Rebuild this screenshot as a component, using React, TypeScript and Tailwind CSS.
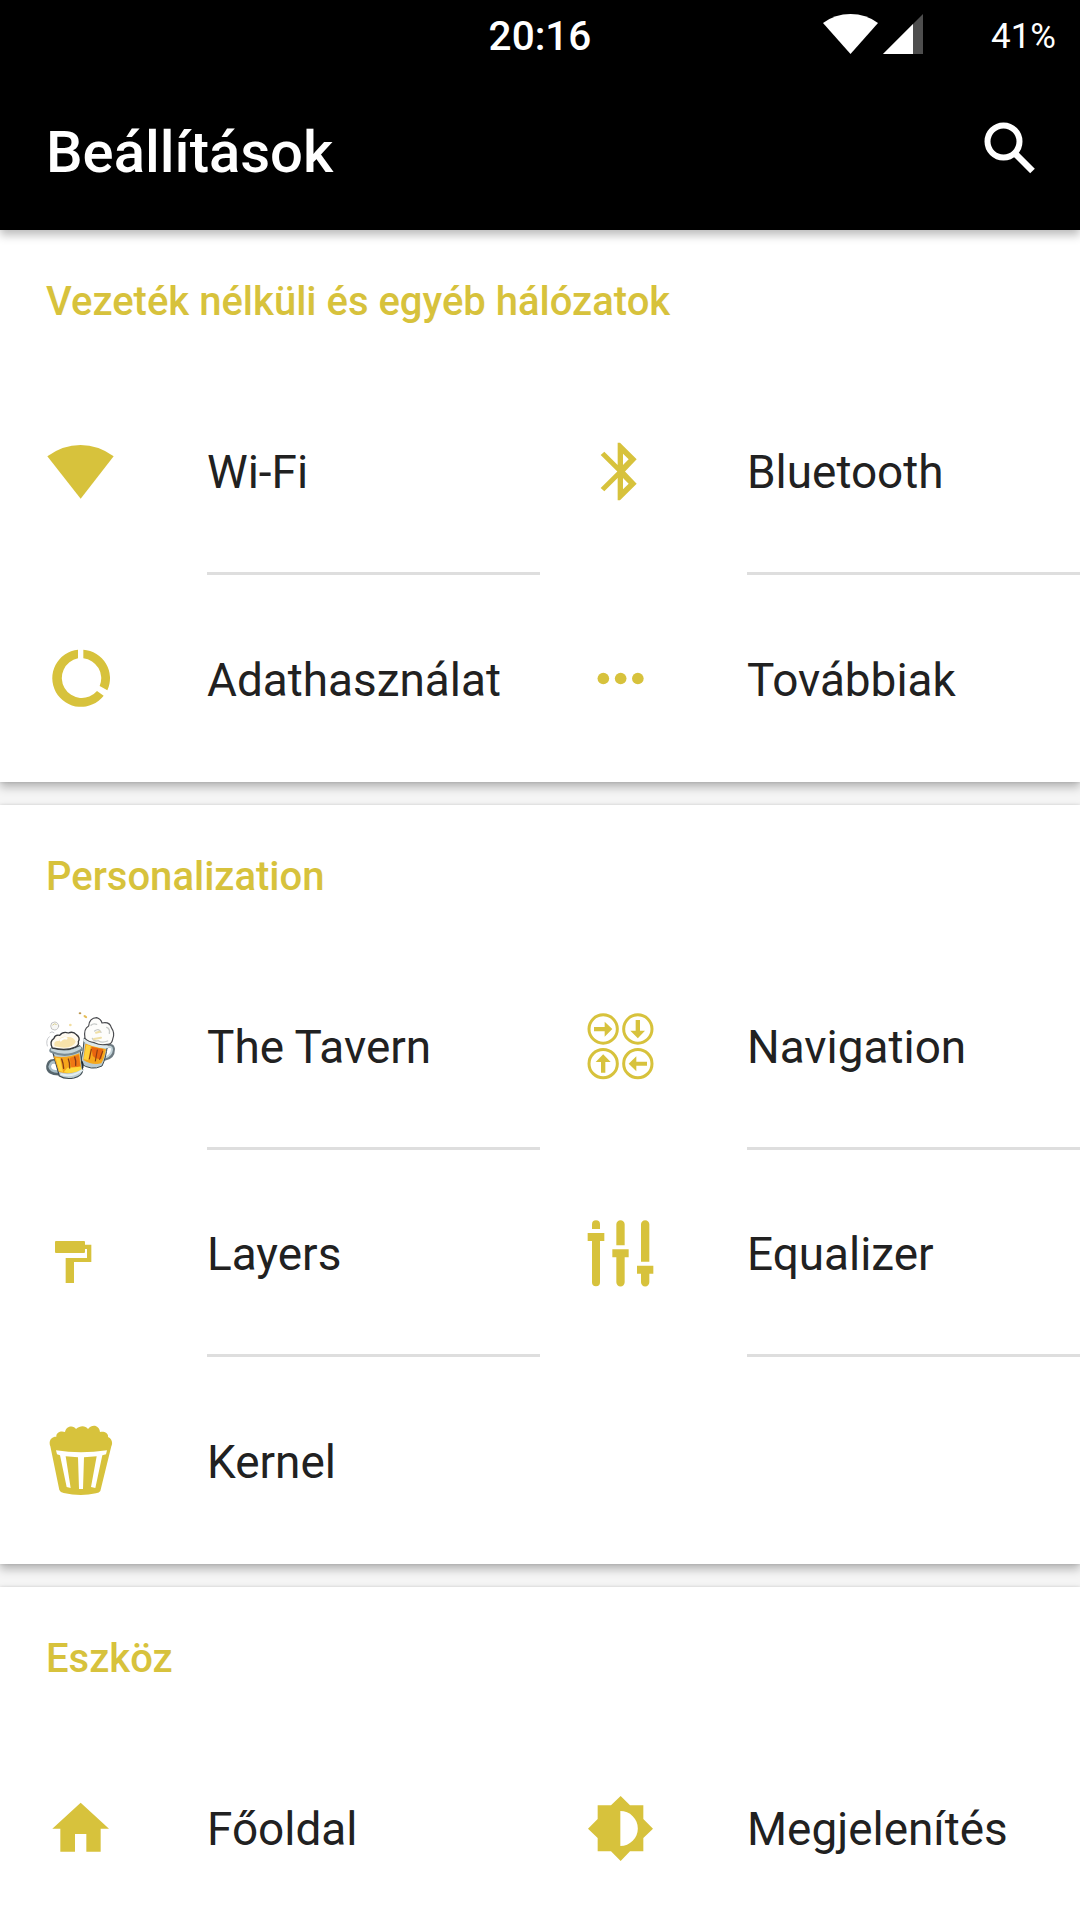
import type { ReactNode } from "react";

type IconProps = { box: string; children: ReactNode };

function Icon({ box, children }: IconProps) {
  return (
    <svg className="mb-px block size-[72px] shrink-0" viewBox={box} fill="currentColor">
      <g transform="translate(0 1.5)">{children}</g>
    </svg>
  );
}

const wifi = (
  <Icon box="45 46.5 216 216">
    <path d="M52 109Q98 75 151.500 75T251 109L152 236Z" />
  </Icon>
);

const bluetooth = (
  <Icon box="75 46.5 216 216">
    <path
      fillRule="evenodd"
      d="M173 68H180L230 118L195 154.500L230 191L180 241H173V174L133 214L122 204L172 154.500L122 105L133 95L173 135ZM189 101V135L206 118ZM189 174V208L206 191Z"
    />
  </Icon>
);

const dataUsage = (
  <Icon box="45 667.5 216 216">
    <path d="M144 689V715A60 60 0 1 0 201 813L221 827A86 86 0 1 1 144 689Z" />
    <path d="M160 689A86 86 0 0 1 232 811L209 798A60 60 0 0 0 160 715Z" />
  </Icon>
);

const more = (
  <Icon box="75 667.5 216 216">
    <circle cx="130" cy="775.500" r="17.500" />
    <circle cx="182" cy="775.500" r="17.500" />
    <circle cx="233.500" cy="775.500" r="17.500" />
  </Icon>
);

const tavern = (
  <Icon box="45 61.5 216 216">
    <g strokeLinecap="round" strokeLinejoin="round">
      {/* stray bubbles */}
      <circle cx="74" cy="108" r="12" fill="#f7f7f5" stroke="#b9b9b9" strokeWidth="2.500" />
      <path d="M68 105q5-7 11-2" fill="none" stroke="#d8cd90" strokeWidth="3" />
      <ellipse cx="150" cy="70" rx="4" ry="3" fill="#bb9750" />
      <ellipse cx="166" cy="80" rx="6" ry="3.500" fill="#e5bd58" transform="rotate(35 166 80)" />
      <circle cx="121" cy="105" r="4" fill="#f2dea0" />
      <path d="M52 168Q46 150 58 140M60 128Q66 122 72 128" fill="none" stroke="#c7c9cc" strokeWidth="3" />
      {/* right mug */}
      <path d="M229 172Q248 160 250 177Q250 203 224 207" fill="none" stroke="#6d7a81" strokeWidth="10" />
      <path d="M229 173Q246 165 246 179Q244 197 225 203" fill="none" stroke="#c3d4da" strokeWidth="6" />
      <path d="M163 145L232 166Q228 205 216 228Q184 244 151 220Q160 188 163 145Z" fill="#b9cad0" stroke="#3d4a50" strokeWidth="3" />
      <path d="M166 161L228 178Q224 204 214 220Q185 226 160 210Z" fill="#f6a81c" />
      <path d="M184 170L220 178L214 207Q196 207 188 197Z" fill="#e9650f" />
      <path d="M169 164L182 168L175 211L161 207Z" fill="#ffd23c" />
      <path d="M184 178L178 207M202 180L196 213M218 184L209 208" stroke="#8c3c12" strokeWidth="3.500" fill="none" />
      <path d="M164 151Q184 169 231 170" stroke="#dce7ea" strokeWidth="9" fill="none" />
      <path d="M165 145Q160 116 176 108Q178 84 200 83Q213 87 216 99Q239 94 244 113Q256 130 248 148Q245 164 231 163Q211 167 193 158Q174 155 165 145Z" fill="#fdfdfb" stroke="#4b4c50" strokeWidth="3.500" />
      <path d="M187 145Q191 156 205 152Q216 160 233 153M194 123Q206 113 213 127M183 106Q190 99 200 103M230 112Q241 116 238 130" fill="none" stroke="#c8cbc9" strokeWidth="4" />
      <path d="M198 128L209 125M192 147L213 143" stroke="#efe0a7" strokeWidth="6" />
      {/* left mug */}
      <path d="M84 216Q59 207 55 229Q54 251 88 250" fill="none" stroke="#56656c" strokeWidth="13" />
      <path d="M83 217Q62 211 59 230Q61 245 85 245" fill="none" stroke="#a9bec7" strokeWidth="8" />
      <path d="M65 174Q106 188 149 167L158 240Q157 258 132 264Q105 269 88 258Z" fill="#bccdd2" stroke="#3d4a50" strokeWidth="3.500" />
      <path d="M71 199Q111 206 148 190L154 237Q122 256 87 246Z" fill="#f6a51b" />
      <path d="M119 204L146 194L151 227L125 237Z" fill="#ef7815" />
      <path d="M77 203L90 205L99 246L87 243Z" fill="#ffd640" />
      <path d="M112 233L153 230L154 239Q129 253 101 247Z" fill="#ffda3c" />
      <path d="M95 207Q100 220 101 235M115 207Q120 219 119 234M134 201Q139 213 137 226" fill="none" stroke="#863b16" strokeWidth="4" />
      <path d="M66 181Q108 200 150 177" fill="none" stroke="#788b94" strokeWidth="16" />
      <path d="M67 179Q108 197 149 174" fill="none" stroke="#c6d6db" strokeWidth="9" />
      <path d="M94 253Q127 262 156 241" fill="none" stroke="#e3eef0" strokeWidth="6" />
      <path d="M156 216Q160 222 158 232" fill="none" stroke="#202a2d" strokeWidth="5" />
      <path d="M67 174Q57 154 72 145Q75 133 89 136Q99 123 115 129Q130 123 139 134Q152 143 145 155Q148 166 136 171Q109 184 67 174Z" fill="#fffaf0" stroke="#37393d" strokeWidth="4" />
      <path d="M74 169Q69 152 86 153Q94 137 110 141Q132 139 137 155Q131 172 102 173Z" fill="#f9e3ab" />
      <path d="M92 151Q99 142 109 145" fill="none" stroke="#fff" strokeWidth="7" />
    </g>
  </Icon>
);

const navigation = (
  <Icon box="45 61.5 216 216">
    <g fill="none" stroke="currentColor" strokeWidth="9">
      <circle cx="99.500" cy="117" r="42.500" />
      <circle cx="203.500" cy="117" r="42.500" />
      <circle cx="99.500" cy="221" r="42.500" />
      <circle cx="203.500" cy="221" r="42.500" />
    </g>
    <path d="M72 111H104V95L127 117L104 140V124H72Z" />
    <path d="M197 90H210V122H225L203.500 145L181 122H197Z" />
    <path d="M93 248V216H77L99.500 193L122 216H106V248Z" />
    <path d="M231 215H199V199L176 221L199 244V227H231Z" />
  </Icon>
);

const layers = (
  <Icon box="45 52.5 216 216">
    <path d="M78 123H162Q165 123 165 126V134H184V186H132V249H107V174H171V147H165V156Q165 159 162 159H78Q75 159 75 156V126Q75 123 78 123Z" />
  </Icon>
);

const equalizer = (
  <Icon box="45 52.5 216 216">
    <path d="M66 87V73A12 12 0 0 1 90 73V87ZM53 99H103V123H90V247A12 12 0 0 1 66 247V123H53Z" />
    <path d="M139 136V73A12.500 12.500 0 0 1 164 73V136ZM127 148H176V172H164V247A12.500 12.500 0 0 1 139 247V172H127Z" />
    <path d="M213 185V73A12.500 12.500 0 0 1 238 73V185ZM201 197H250V221H238V247A12.500 12.500 0 0 1 213 247V221H201Z" />
  </Icon>
);

const kernel = (
  <Icon box="45 43.5 216 216">
    <path d="M61 109C54 91 66 79 79 80C78 67 93 61 105 66C109 46 132 46 138 57C151 46 166 47 174 57C188 40 208 47 210 66C225 63 236 71 234 81C246 86 249 99 244 109L211 243Q208 248 198 250Q151 260 101 249Q91 247 88 240Z" />
    <path
      fill="#fff"
      d="M78 121Q151 133 231 121L228 133L217 136L196 234L183 231L200 139L162 142L159 237H147L144 142L107 139L122 234L110 231L90 136L81 133Z"
    />
  </Icon>
);

const home = (
  <Icon box="45 37.5 216 216">
    <path d="M152 68L237 146H212V215H169V162H135V215H91V146H67Z" />
  </Icon>
);

const brightness = (
  <Icon box="45 37.5 216 216">
    <path
      fillRule="evenodd"
      d="M152 48L180 76H220V117L249 146L220 174V214H180L152 243L123 214H83V174L54 146L83 117V76H123ZM151 93V198A52.500 52.500 0 0 0 151 93Z"
    />
  </Icon>
);

type Item = { label: string; icon: ReactNode };
type Section = { title: string; items: Item[] };

const sections: Section[] = [
  {
    title: "Vezeték nélküli és egyéb hálózatok",
    items: [
      { label: "Wi-Fi", icon: wifi },
      { label: "Bluetooth", icon: bluetooth },
      { label: "Adathasználat", icon: dataUsage },
      { label: "Továbbiak", icon: more },
    ],
  },
  {
    title: "Personalization",
    items: [
      { label: "The Tavern", icon: tavern },
      { label: "Navigation", icon: navigation },
      { label: "Layers", icon: layers },
      { label: "Equalizer", icon: equalizer },
      { label: "Kernel", icon: kernel },
    ],
  },
  {
    title: "Eszköz",
    items: [
      { label: "Főoldal", icon: home },
      { label: "Megjelenítés", icon: brightness },
    ],
  },
];

function Tile({ item, divided }: { item: Item; divided: boolean }) {
  return (
    <div className="flex h-[207px] items-center pl-[44.5px]">
      {item.icon}
      <div
        className={
          divided
            ? "ml-[90.5px] flex h-full flex-1 items-center border-b-[3px] border-[#dedede] pt-[3px]"
            : "ml-[90.5px] flex h-full flex-1 items-center pt-[2px]"
        }
      >
        <span className="whitespace-nowrap text-[45.9px] leading-[46px] text-[#212121]">{item.label}</span>
      </div>
    </div>
  );
}

function SectionCard({ section }: { section: Section }) {
  const lastRow = Math.max(1, Math.floor((section.items.length - 1) / 2));
  return (
    <section className="shrink-0 bg-white text-[#d7c23c] shadow-[0_5px_9px_rgba(0,0,0,0.27),0_0_3px_rgba(0,0,0,0.12)]">
      <h2 className="flex h-[138px] items-center pl-[46px] pt-[6px] text-[40px] font-medium leading-none">
        {section.title}
      </h2>
      <div className="grid grid-cols-2">
        {section.items.map((item, i) => (
          <Tile key={item.label} item={item} divided={Math.floor(i / 2) < lastRow} />
        ))}
      </div>
    </section>
  );
}

export default function App() {
  return (
    <div className="flex h-[1920px] w-[1080px] flex-col overflow-hidden bg-[#f5f5f5] font-['Roboto',sans-serif]">
      <header className="relative z-10 h-[230px] shrink-0 bg-black text-white shadow-[0_5px_9px_rgba(0,0,0,0.27)]">
        <div className="grid h-[72px] grid-cols-[1fr_auto_1fr] items-center">
          <span />
          <span className="text-[40.5px] font-medium leading-[40px]">20:16</span>
          <div className="flex items-center justify-end pr-[24px]">
            <svg className="mb-[4px] mr-[68px] h-[40px] w-[100px]" viewBox="0 0 100 40">
              <path d="M0 9Q12 0 27.500 0T55 9L27.500 40Z" fill="#fff" />
              <path d="M60 40L100 0V40Z" fill="#4e4e4e" />
              <path d="M60 40L90 10V40Z" fill="#fff" />
            </svg>
            <span className="text-[35px] leading-none">41%</span>
          </div>
        </div>
        <div className="flex h-[158px] items-center justify-between pl-[46px] pr-[44px]">
          <h1 className="pt-[2px] text-[58px] font-medium leading-none">Beállítások</h1>
          <svg className="mb-[7px] size-[52px]" viewBox="0 0 52 52" fill="none" stroke="#fff">
            <circle cx="19.500" cy="19.500" r="16" strokeWidth="6" />
            <path d="M31.500 32L48.500 49" strokeWidth="6.500" />
            <path d="M30 31L34 34" strokeWidth="5" />
          </svg>
        </div>
      </header>
      <main className="flex flex-col gap-[23px]">
        {sections.map((section) => (
          <SectionCard key={section.title} section={section} />
        ))}
      </main>
    </div>
  );
}
